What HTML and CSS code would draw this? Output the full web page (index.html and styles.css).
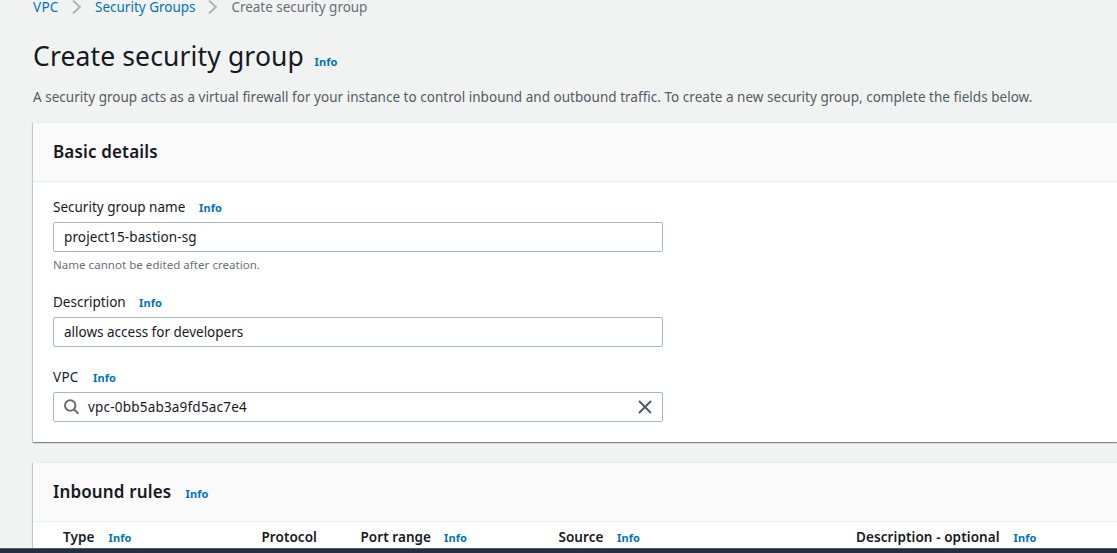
FILE: index.html
```html
<!DOCTYPE html>
<html lang="en">
<head>
<meta charset="utf-8">
<title>Create security group</title>
<link rel="stylesheet" href="styles.css">
</head>
<body>
<div class="page">
  <main class="content">
    <nav class="breadcrumb">
      <a class="crumb crumb-vpc">VPC</a>
      <svg class="chevron" width="10" height="16" viewBox="0 0 10 16"><path d="M1 1.5 7.8 8 1 14.5"/></svg>
      <a class="crumb crumb-groups">Security Groups</a>
      <svg class="chevron" width="10" height="16" viewBox="0 0 10 16"><path d="M1 1.5 7.8 8 1 14.5"/></svg>
      <span class="crumb crumb-current">Create security group</span>
    </nav>
    <header class="title-row">
      <h1 class="title">Create security group</h1>
      <a class="info">Info</a>
    </header>
    <p class="intro">A security group acts as a virtual firewall for your instance to control inbound and outbound traffic. To create a new security group, complete the fields below.</p>

    <section class="panel">
      <div class="panel-head"><h2 class="panel-title">Basic details</h2></div>
      <div class="panel-body">
        <div class="field">
          <div class="label-row"><label class="label label-name">Security group name</label><a class="info">Info</a></div>
          <div class="input"><span class="value value-name">project15-bastion-sg</span></div>
          <div class="hint">Name cannot be edited after creation.</div>
        </div>
        <div class="field">
          <div class="label-row"><label class="label label-desc">Description</label><a class="info">Info</a></div>
          <div class="input"><span class="value value-desc">allows access for developers</span></div>
        </div>
        <div class="field">
          <div class="label-row"><label class="label label-vpc">VPC</label><a class="info">Info</a></div>
          <div class="input">
            <svg class="search" width="16" height="16" viewBox="0 0 16 16"><circle cx="6.2" cy="6.5" r="5.2"/><path d="M10 10.3 14.4 14.7"/></svg>
            <span class="value value-vpc">vpc-0bb5ab3a9fd5ac7e4</span>
            <svg class="clear" width="14" height="14" viewBox="0 0 14 14"><path d="M1 1 13 13M13 1 1 13"/></svg>
          </div>
        </div>
      </div>
    </section>

    <section class="panel">
      <div class="panel-head"><h2 class="panel-title panel-title-rules">Inbound rules</h2><a class="info">Info</a></div>
      <div class="columns">
        <div class="column"><span class="column-name col-type">Type</span><a class="info">Info</a></div>
        <div class="column"><span class="column-name col-protocol">Protocol</span></div>
        <div class="column"><span class="column-name col-port">Port range</span><a class="info">Info</a></div>
        <div class="column"><span class="column-name col-source">Source</span><a class="info">Info</a></div>
        <div class="column"><span class="column-name col-desc">Description - optional</span><a class="info">Info</a></div>
      </div>
    </section>
  </main>
  <footer class="footer"></footer>
</div>
</body>
</html>
```
FILE: styles.css
```css
* { box-sizing: border-box; }
body {
  margin: 0;
  background: #f1f3f3;
  color: #16191f;
  font-family: "Noto Sans", "Open Sans", sans-serif;
  font-size: 13.5px;
  line-height: 20px;
}
.page { height: 553px; display: flex; flex-direction: column; overflow: hidden; }
.content { flex: 1; min-height: 0; overflow: hidden; padding-left: 33px; }
.breadcrumb { display: flex; align-items: center; height: 15px; line-height: 14px; }
.crumb { white-space: nowrap; color: #0073bb; padding-bottom: 2px; }
.crumb-vpc { width: 39px; letter-spacing: .3px; }
.crumb-groups { width: 113px; margin-left: 13px; }
.crumb-current { color: #687078; margin-left: 13.5px; letter-spacing: -.04px; }
.chevron { fill: none; stroke: #aab7b8; stroke-width: 2; margin-top: -1px; }
.title-row { display: flex; align-items: baseline; margin-top: 23px; height: 36px; }
.title { margin: 0; width: 281.5px; font-size: 26.5px; line-height: 36px; font-weight: 400; letter-spacing: .13px; white-space: nowrap; }
.info { color: #0073bb; font-size: 11px; font-weight: 700; line-height: 16px; letter-spacing: .1px; }
.intro { margin: 13px 0 15px; height: 20px; color: #545b64; letter-spacing: .025px; white-space: nowrap; }
.panel {
  background: #fff;
  margin-bottom: 20px;
  border-top: 1px solid #eaeded;
  box-shadow: 0 1px 1px 0 rgba(0,28,36,.3), 1px 1px 1px 0 rgba(0,28,36,.15), -1px 1px 1px 0 rgba(0,28,36,.15);
}
.panel-head { display: flex; align-items: baseline; height: 59px; padding: 18px 20px 0; background: #fafafa; border-bottom: 1px solid #eaeded; }
.panel-title { margin: 0; font-size: 17px; line-height: 22px; font-weight: 600; letter-spacing: .15px; white-space: nowrap; }
.panel-title-rules { width: 132.5px; }
.panel-body { display: flex; flex-direction: column; gap: 20px; height: 260px; padding: 15px 20px 0; }
.label-row { display: flex; align-items: baseline; height: 25px; }
.label { white-space: nowrap; }
.label-name { width: 146px; }
.label-desc { width: 86px; }
.label-vpc { width: 40px; letter-spacing: .3px; }
.input { display: flex; align-items: center; width: 610px; height: 30px; padding: 0 10px; border: 1px solid #aab7b8; border-radius: 2px; background: #fff; }
.value { white-space: nowrap; }
.value-name { letter-spacing: .12px; }
.value-vpc { letter-spacing: .2px; }
.hint { height: 20px; padding-top: 3px; font-size: 11.5px; letter-spacing: .04px; color: #687078; }
.search { fill: none; stroke: #687078; stroke-width: 2; margin-right: 8px; }
.clear { fill: none; stroke: #545b64; stroke-width: 2; margin-left: auto; }
.columns { display: grid; grid-template-columns: 198.5px 99px 198px 297.5px 1fr; padding: 5px 30px 0; height: 60px; }
.column { display: flex; align-items: baseline; }
.column-name { font-weight: 600; letter-spacing: .06px; white-space: nowrap; }
.col-type { width: 45.5px; }
.col-port { width: 83.5px; }
.col-source { width: 58.5px; }
.col-desc { width: 157.5px; letter-spacing: .09px; }
.footer { flex: none; height: 5px; background: #232f3e; border-top: 1px solid #545b64; }
```
